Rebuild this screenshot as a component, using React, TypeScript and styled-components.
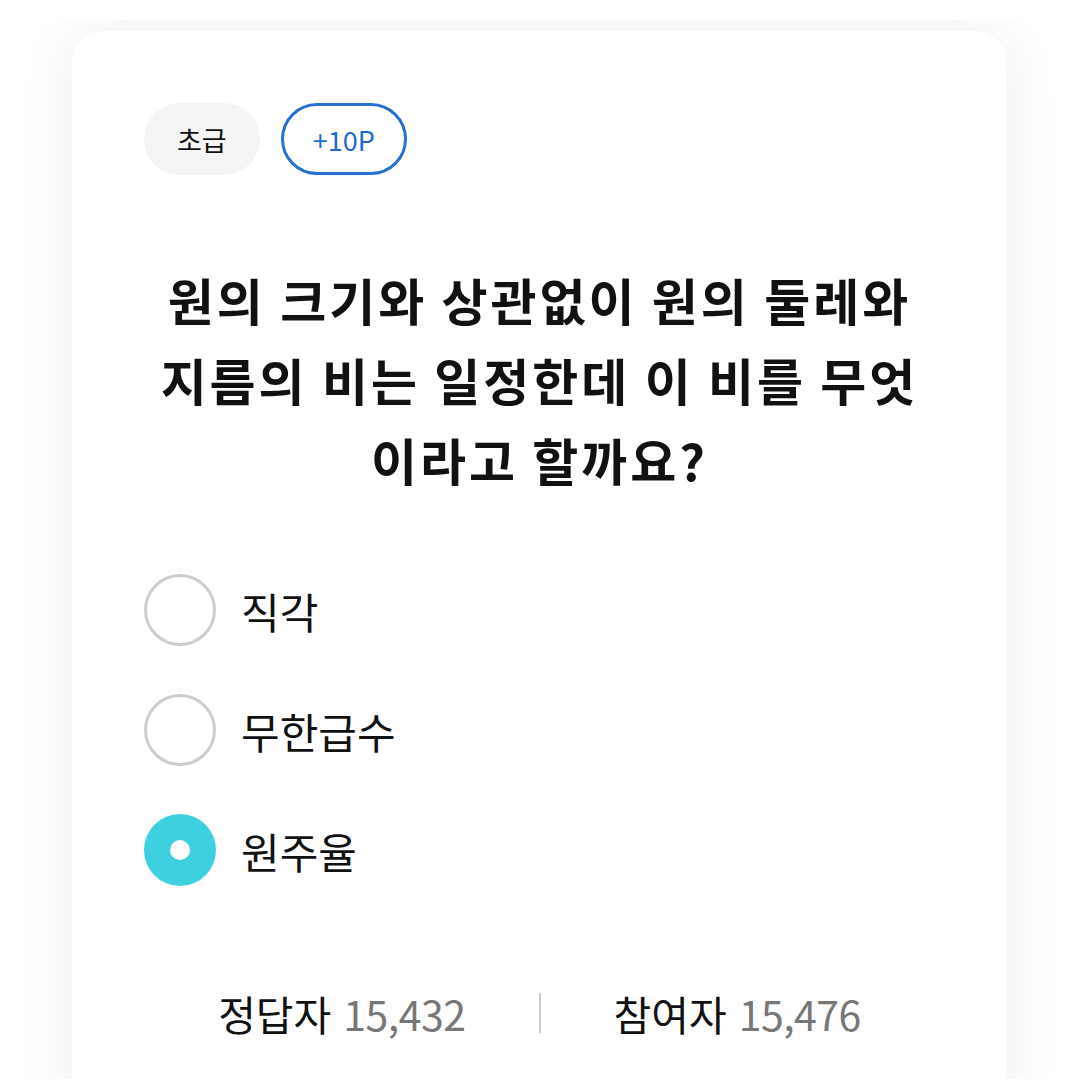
import React, { useState } from "react";
import styled, { createGlobalStyle } from "styled-components";

const GlobalStyle = createGlobalStyle`
  html, body {
    margin: 0;
    padding: 0;
    background: #ffffff;
  }
  body {
    font-family: "Noto Sans CJK KR", "Noto Sans", sans-serif;
    color: #111111;
  }
`;

const Page = styled.div`
  margin-top: 20px;
  padding: 11px 72px 0;
  overflow: hidden;
  height: 1059px;
  box-sizing: border-box;
`;

const Card = styled.div`
  background: #ffffff;
  border-radius: 32px 32px 0 0;
  box-shadow: 0 0 60px rgba(0, 0, 0, 0.07);
  padding: 72px 72px 60px;
  min-height: 1100px;
  box-sizing: border-box;
`;

const ChipRow = styled.div`
  display: flex;
  gap: 21px;
`;

const Chip = styled.span<{ $outlined?: boolean }>`
  display: inline-flex;
  align-items: center;
  justify-content: center;
  height: 72px;
  box-sizing: border-box;
  padding: 0 ${(p) => (p.$outlined ? "29px" : "33px")};
  border-radius: 36px;
  font-size: 27px;
  background: ${(p) => (p.$outlined ? "#ffffff" : "#f4f4f4")};
  color: ${(p) => (p.$outlined ? "#1f6ad0" : "#111111")};
  border: ${(p) => (p.$outlined ? "3px solid #2670d2" : "none")};
`;

const Question = styled.h1`
  margin: 84px -40px 0;
  font-size: 50px;
  font-weight: 700;
  line-height: 80px;
  text-align: center;
  letter-spacing: 3px;
  color: #111111;
`;

const Options = styled.div`
  display: flex;
  flex-direction: column;
  gap: 48px;
  margin-top: 75px;
`;

const Option = styled.label`
  display: flex;
  align-items: center;
  gap: 25px;
  cursor: pointer;
  font-size: 42px;
  color: #111111;
`;

const Radio = styled.span<{ $checked?: boolean }>`
  width: 72px;
  height: 72px;
  border-radius: 50%;
  box-sizing: border-box;
  display: flex;
  align-items: center;
  justify-content: center;
  flex-shrink: 0;
  background: ${(p) => (p.$checked ? "#3fd0e0" : "#ffffff")};
  border: ${(p) => (p.$checked ? "none" : "3px solid #cccccc")};

  &::after {
    content: "";
    display: ${(p) => (p.$checked ? "block" : "none")};
    width: 20px;
    height: 20px;
    border-radius: 50%;
    background: #ffffff;
  }
`;

const Stats = styled.div`
  display: flex;
  align-items: center;
  justify-content: center;
  gap: 73px;
  margin-top: 97px;
`;

const Stat = styled.div`
  font-size: 41px;
  color: #111111;
`;

const Count = styled.span`
  color: #777777;
  margin-left: 12px;
  letter-spacing: -0.5px;
`;

const Divider = styled.span`
  width: 2px;
  height: 40px;
  background: #cccccc;
`;

const choices = ["직각", "무한급수", "원주율"];

export default function App() {
  const [selected, setSelected] = useState(2);

  return (
    <>
      <GlobalStyle />
      <Page>
        <Card>
          <ChipRow>
            <Chip>초급</Chip>
            <Chip $outlined>+10P</Chip>
          </ChipRow>
          <Question>
            원의 크기와 상관없이 원의 둘레와
            <br />
            지름의 비는 일정한데 이 비를 무엇
            <br />
            이라고 할까요?
          </Question>
          <Options>
            {choices.map((c, i) => (
              <Option key={c} onClick={() => setSelected(i)}>
                <Radio $checked={selected === i} />
                {c}
              </Option>
            ))}
          </Options>
          <Stats>
            <Stat>
              정답자<Count>15,432</Count>
            </Stat>
            <Divider />
            <Stat>
              참여자<Count>15,476</Count>
            </Stat>
          </Stats>
        </Card>
      </Page>
    </>
  );
}
